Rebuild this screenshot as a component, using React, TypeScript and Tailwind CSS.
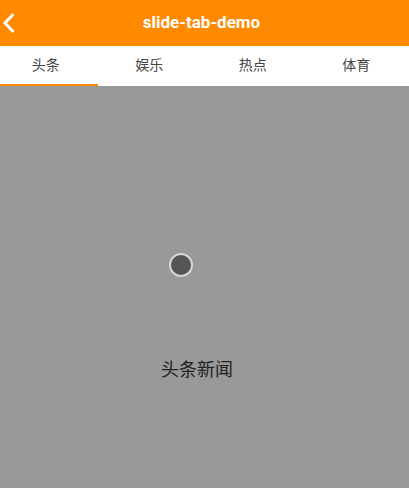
const tabs = ["头条", "娱乐", "热点", "体育"]

export default function App() {
  return (
    <div className="flex h-[488px] w-[409px] flex-col bg-[#999999] font-['Roboto','Noto_Sans_CJK_SC',sans-serif]">
      <div className="relative flex h-[46px] items-center justify-center bg-[#ff8a00]">
        <svg className="absolute left-[2px] top-[12px]" width="14" height="22" viewBox="0 0 14 22">
          <path d="M11.5 2 L3 11 L11.5 20" fill="none" stroke="#fff" strokeWidth="3" />
        </svg>
        <span className="-ml-[6px] text-[17px] font-bold text-white">slide-tab-demo</span>
      </div>
      <div className="h-[40px] overflow-hidden bg-white">
        <div className="-ml-[6px] flex h-[38px]">
          {tabs.map((t) => (
            <div key={t} className="flex w-[103.5px] items-center justify-center pt-[1px] text-[14px] text-[#444]">
              {t}
            </div>
          ))}
        </div>
        <div className="h-[2px] w-[98px] bg-[#ff8a00]" />
      </div>
      <div className="flex flex-1 flex-col items-center">
        <div className="ml-[-47px] mt-[167px] h-[24px] w-[24px] rounded-full border-2 border-[#d6d6d6] bg-[#555555]" />
        <div className="ml-[-15px] mt-[79px] text-[18px] text-[#222]">头条新闻</div>
      </div>
    </div>
  )
}
